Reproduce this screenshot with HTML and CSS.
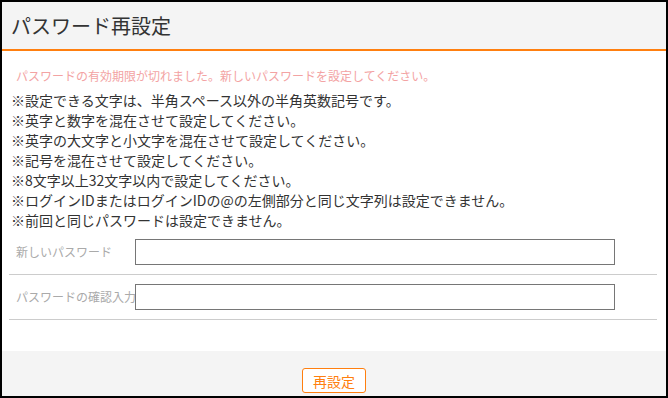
FILE: index.html
```html
<!DOCTYPE html>
<html lang="ja">
<head>
    <meta charset="UTF-8">
    <meta name="viewport" content="width=device-width, initial-scale=1.0">
    <title>パスワード再設定</title>
    <link rel="stylesheet" href="styles.css">
</head>
<body>
    <div class="dialog">
        <div class="dialog-header">
            <h1>パスワード再設定</h1>
        </div>
        <div class="dialog-body">
            <p class="notice">パスワードの有効期限が切れました。新しいパスワードを設定してください。</p>
            <ul class="rules">
                <li>※設定できる文字は、半角スペース以外の半角英数記号です。</li>
                <li>※英字と数字を混在させて設定してください。</li>
                <li>※英字の大文字と小文字を混在させて設定してください。</li>
                <li>※記号を混在させて設定してください。</li>
                <li>※8文字以上32文字以内で設定してください。</li>
                <li>※ログインIDまたはログインIDの@の左側部分と同じ文字列は設定できません。</li>
                <li>※前回と同じパスワードは設定できません。</li>
            </ul>
            <div class="form-row">
                <label class="form-label" for="newPassword">新しいパスワード</label>
                <input class="form-input" type="password" id="newPassword">
            </div>
            <div class="form-row">
                <label class="form-label" for="confirmPassword">パスワードの確認入力</label>
                <input class="form-input" type="password" id="confirmPassword">
            </div>
        </div>
        <div class="dialog-footer">
            <button class="button" type="button">再設定</button>
        </div>
    </div>
</body>
</html>
```

FILE: styles.css
```css
body {
    margin: 0;
    font-family: "Noto Sans CJK JP", "Noto Sans", sans-serif;
    color: #333;
    background-color: #fff;
}
.dialog {
    width: 668px;
    height: 398px;
    box-sizing: border-box;
    border: 2px solid #000;
    display: flex;
    flex-direction: column;
    overflow: hidden;
}
.dialog-header {
    height: 47px;
    background-color: #f4f4f4;
    border-bottom: 2px solid #ff7f0f; /* orange accent */
    display: flex;
    align-items: center;
    padding-left: 9px;
}
h1 {
    margin: 0;
    font-size: 20px;
    font-weight: normal;
    line-height: 24px;
    color: #333;
}
.dialog-body {
    flex: 1;
    padding: 16px 9px 0 7px;
}
.notice {
    margin: 0 0 5px 7px;
    font-size: 12px;
    line-height: 18px;
    color: #f3a3a3;
}
.rules {
    list-style: none;
    margin: 0 0 0 2px;
    padding: 0;
    font-size: 14px;
    line-height: 20px;
}
.form-row {
    display: flex;
    align-items: center;
    padding: 9px 0;
    border-bottom: 1px solid #ccc;
}
.form-label {
    width: 119px;
    padding-left: 7px;
    font-size: 12px;
    line-height: 16px;
    color: #aaa;
    white-space: nowrap;
}
.form-input {
    width: 480px;
    height: 26px;
    box-sizing: border-box;
    margin: 0;
    border: 1px solid #767676;
    padding: 2px 4px;
    font-size: 13px;
}
.dialog-footer {
    height: 45px;
    box-sizing: border-box;
    background-color: #f4f4f4;
    display: flex;
    justify-content: center;
    align-items: flex-start;
    padding-top: 17px;
}
.button {
    width: 64px;
    height: 25px;
    padding: 0;
    background-color: #fff;
    color: #ff7f0f;
    border: 1px solid #ff7f0f;
    border-radius: 3px;
    font-family: "Noto Sans CJK JP", sans-serif;
    font-size: 14px;
    line-height: 20px;
    cursor: pointer;
}
```
